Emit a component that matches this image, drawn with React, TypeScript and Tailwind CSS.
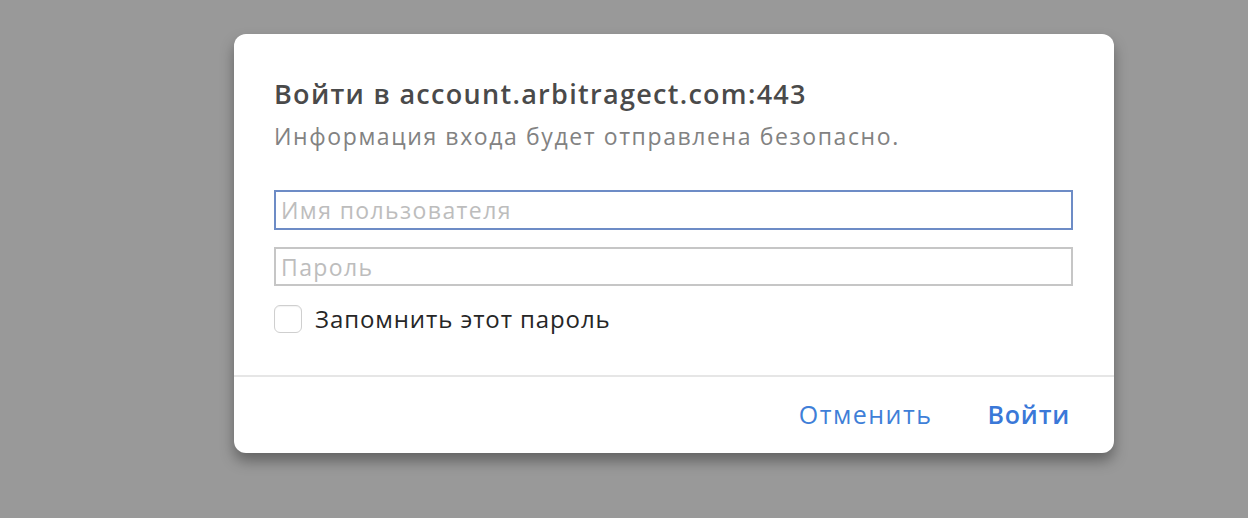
export default function App() {
  return (
    <div className="h-[518px] w-[1248px] overflow-hidden bg-[#999999] font-['Open_Sans','Liberation_Sans',sans-serif]">
      <div className="ml-[234px] mt-[34px] flex h-[419px] w-[880px] flex-col rounded-[12px] bg-white shadow-[0_8px_14px_rgba(0,0,0,0.35)]">
        <div className="flex flex-col px-[40px] pt-[44px]">
          <h1 className="text-[27px] font-semibold leading-[32px] tracking-[1.3px] text-[#4a4a4a]">Войти в account.arbitragect.com:443</h1>
          <p className="mt-[12px] text-[23px] leading-[28px] tracking-[1.6px] text-[#828282]">Информация входа будет отправлена безопасно.</p>
          <input
            className="mt-[40px] h-[40px] w-[799px] border-2 border-[#6d8cc6] px-[5px] text-[23px] tracking-[1.4px] text-[#333] outline-none placeholder:text-[#bdbdbd]"
            placeholder="Имя пользователя"
          />
          <input
            type="password"
            className="mt-[17px] h-[39px] w-[799px] border-2 border-[#c6c6c6] px-[5px] text-[23px] tracking-[1.4px] text-[#333] outline-none placeholder:text-[#bdbdbd]"
            placeholder="Пароль"
          />
          <label className="mt-[18px] flex items-center gap-[13px]">
            <span className="h-[28px] w-[28px] rounded-[6px] border border-[#cfcfcf] bg-white shadow-[inset_0_1px_1px_rgba(0,0,0,0.05)]" />
            <span className="text-[24px] leading-[30px] tracking-[0.9px] text-[#262626]">Запомнить этот пароль</span>
          </label>
        </div>
        <div className="mt-auto h-[2px] bg-[#e6e6e6]" />
        <div className="flex h-[76px] items-center justify-end gap-[55px] pr-[44px]">
          <button type="button" className="text-[25px] tracking-[1.5px] text-[#3f7fd8]">Отменить</button>
          <button type="button" className="text-[25px] font-semibold tracking-[0.8px] text-[#3a78d8]">Войти</button>
        </div>
      </div>
    </div>
  );
}
